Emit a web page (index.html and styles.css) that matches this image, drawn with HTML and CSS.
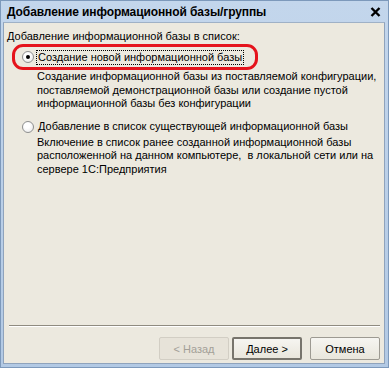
FILE: index.html
```html
<!DOCTYPE html>
<html lang="ru">
<head>
    <meta charset="UTF-8">
    <title>Добавление информационной базы/группы</title>
    <link rel="stylesheet" href="styles.css">
</head>
<body>
    <div class="window">
        <div class="titlebar">
            <span class="title">Добавление информационной базы/группы</span>
            <svg class="close" width="11" height="10" viewBox="0 0 11 10">
                <path d="M1.5 1 L9.5 9 M9.5 1 L1.5 9" stroke="#000" stroke-width="2.4" fill="none"/>
            </svg>
        </div>
        <div class="client">
            <div class="content">
                <p class="caption">Добавление информационной базы в список:</p>

                <div class="option">
                    <div class="option-row">
                        <span class="radio checked"></span>
                        <span class="label focused">Создание новой информационной базы</span>
                        <span class="mark"></span>
                    </div>
                    <p class="desc">Создание информационной базы из поставляемой конфигурации,<br>поставляемой демонстрационной базы или создание пустой<br>информационной базы без конфигурации</p>
                </div>

                <div class="option second">
                    <div class="option-row">
                        <span class="radio"></span>
                        <span class="label">Добавление в список существующей информационной базы</span>
                    </div>
                    <p class="desc">Включение в список ранее созданной информационной базы<br>расположенной на данном компьютере,&nbsp; в локальной сети или на<br>сервере 1С:Предприятия</p>
                </div>
            </div>

            <div class="separator"></div>

            <div class="buttons">
                <button class="btn" disabled>&lt; Назад</button>
                <button class="btn default">Далее &gt;</button>
                <button class="btn cancel">Отмена</button>
            </div>
        </div>
    </div>
</body>
</html>
```

FILE: styles.css
```css
* {
    box-sizing: border-box;
}

body {
    margin: 0;
    width: 389px;
    height: 368px;
    overflow: hidden;
    font-family: "Liberation Sans", Arial, sans-serif;
    font-size: 11px;
    color: #000;
}

/* Window frame */
.window {
    display: flex;
    flex-direction: column;
    width: 389px;
    height: 368px;
    background: linear-gradient(to bottom, #c3d6ec, #b2c9e4);
    border: 1px solid #7d99bb;
    padding: 0 3px 3px 2px;
}

.titlebar {
    display: flex;
    align-items: center;
    justify-content: space-between;
    height: 21px;
    padding: 0 4px 0 4px;
}

.title {
    font-weight: bold;
    font-size: 12px;
    letter-spacing: -0.1px;
}

.close {
    margin-top: 1px;
}

/* Client area */
.client {
    flex: 1;
    display: flex;
    flex-direction: column;
    background: #ece9df;
    border-top: 1px solid #9fb1c6;
    border-left: 1px solid #8fa3bc;
    border-right: 1px solid #8fa3bc;
    border-bottom: 1px solid #8fa3bc;
}

.content {
    flex: 1;
    padding: 6px 0 0 3px;
}

.caption {
    margin: 0;
    line-height: 14px;
}

.option {
    margin-top: 6px;
}

.option.second {
    margin-top: 8px;
}

.option-row {
    position: relative;
    display: flex;
    align-items: center;
    height: 16px;
    padding-left: 15px;
}

.radio {
    position: relative;
    width: 12px;
    height: 12px;
    border-radius: 50%;
    border: 1px solid #8e8f8f;
    background: radial-gradient(circle at 40% 35%, #fff 30%, #e4e4e4 100%);
    margin-right: 2px;
}

.radio.checked::after {
    content: '';
    position: absolute;
    top: 3px;
    left: 3px;
    width: 4px;
    height: 4px;
    border-radius: 50%;
    background: #000;
}

.label {
    padding: 0 1px;
    line-height: 13px;
    border: 1px dotted transparent;
}

.label.focused {
    border-color: #000;
}

/* red annotation around the selected option */
.mark {
    position: absolute;
    left: 5px;
    top: -5px;
    width: 246px;
    height: 26px;
    border: 3px solid #e5131c;
    border-radius: 11px;
}

.desc {
    margin: 5px 0 0 30px;
    line-height: 13.5px;
}

.second .desc {
    margin-top: 1px;
}

.separator {
    margin: 0 4px 0 5px;
    height: 2px;
    border-top: 1px solid #8f8b80;
    border-bottom: 1px solid #fff;
}

/* Buttons */
.buttons {
    display: flex;
    justify-content: flex-end;
    gap: 3px;
    padding: 10px 4px 3px 0;
}

.btn {
    width: 70px;
    height: 23px;
    font-family: "Liberation Sans", Arial, sans-serif;
    font-size: 11px;
    color: #000;
    background: linear-gradient(to bottom, #f6f5f1, #e9e6dc);
    border: 1px solid #9d9a92;
    border-radius: 2px;
    padding: 0;
}

.btn:disabled {
    color: #a3a098;
    background: #e7e3d9;
    border-color: #d2cec4;
}

.btn.default {
    border: 2px solid #77746c;
}

.btn.cancel {
    margin-left: 5px;
}
```
